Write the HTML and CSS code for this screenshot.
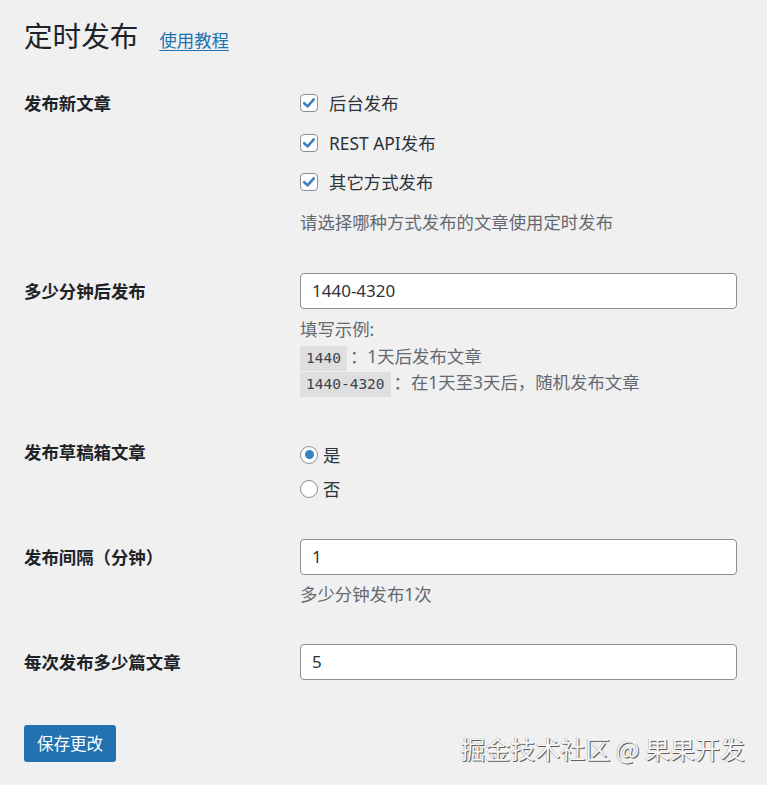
FILE: index.html
```html
<!DOCTYPE html>
<html lang="zh-CN">
<head>
<meta charset="utf-8">
<title>定时发布</title>
<link rel="stylesheet" href="styles.css">
</head>
<body>
<div class="wrap">
  <div class="head">
    <h1 class="title">定时发布</h1>
    <a class="help" href="#">使用教程</a>
  </div>

  <form class="form">
    <div class="row row-1">
      <div class="label">发布新文章</div>
      <div class="field">
        <div class="checks">
          <label class="check"><span class="box"><svg viewBox="0 0 18 18" width="18" height="18"><path d="M4.2 9.2 L7.6 12.4 L13.8 5.4" fill="none" stroke="#3582c4" stroke-width="2.6" stroke-linecap="round" stroke-linejoin="round"/></svg></span>后台发布</label>
          <label class="check"><span class="box"><svg viewBox="0 0 18 18" width="18" height="18"><path d="M4.2 9.2 L7.6 12.4 L13.8 5.4" fill="none" stroke="#3582c4" stroke-width="2.6" stroke-linecap="round" stroke-linejoin="round"/></svg></span>REST API发布</label>
          <label class="check"><span class="box"><svg viewBox="0 0 18 18" width="18" height="18"><path d="M4.2 9.2 L7.6 12.4 L13.8 5.4" fill="none" stroke="#3582c4" stroke-width="2.6" stroke-linecap="round" stroke-linejoin="round"/></svg></span>其它方式发布</label>
        </div>
        <p class="desc desc-1">请选择哪种方式发布的文章使用定时发布</p>
      </div>
    </div>

    <div class="row row-2">
      <div class="label label-input">多少分钟后发布</div>
      <div class="field">
        <div class="input">1440-4320</div>
        <div class="desc desc-lines">
          <div class="line">填写示例:</div>
          <div class="line"><code class="code">1440</code>：1天后发布文章</div>
          <div class="line"><code class="code">1440-4320</code>：在1天至3天后，随机发布文章</div>
        </div>
      </div>
    </div>

    <div class="row row-3">
      <div class="label">发布草稿箱文章</div>
      <div class="field">
        <div class="radios">
          <label class="radio"><span class="dot checked"></span>是</label>
          <label class="radio"><span class="dot"></span>否</label>
        </div>
      </div>
    </div>

    <div class="row row-4">
      <div class="label label-input">发布间隔（分钟）</div>
      <div class="field">
        <div class="input">1</div>
        <p class="desc desc-short">多少分钟发布1次</p>
      </div>
    </div>

    <div class="row row-5">
      <div class="label label-input">每次发布多少篇文章</div>
      <div class="field">
        <div class="input">5</div>
      </div>
    </div>

    <div class="submit">
      <span class="button">保存更改</span>
    </div>
  </form>

  <div class="watermark">掘金技术社区 @ 果果开发</div>
</div>
</body>
</html>
```

FILE: styles.css
```css
html, body {
  margin: 0;
  padding: 0;
  background: #f0f0f1;
}

body {
  font-family: "Noto Sans", "Noto Sans CJK SC", sans-serif;
  color: #1d2327;
  font-size: 17.4px;
  line-height: 26px;
  width: 767px;
  height: 785px;
  overflow: hidden;
}

.wrap {
  position: relative;
  height: 785px;
  padding: 17px 30px 0 24px;
  box-sizing: border-box;
}

.head {
  display: flex;
  align-items: baseline;
  gap: 21px;
}

.title {
  margin: 0;
  font-size: 28.6px;
  line-height: 36px;
  font-weight: 400;
  color: #1d2327;
  font-family: "Noto Sans CJK SC", sans-serif;
}

.help {
  color: #2271b1;
  font-size: 17.4px;
  text-decoration: underline;
  text-underline-offset: 3px;
  font-family: "Noto Sans CJK SC", sans-serif;
}

.form {
  margin: 0;
}

.row {
  display: grid;
  grid-template-columns: 276px 437px;
}

.row-1 { margin-top: 37px; }
.row-2 { margin-top: 38px; }
.row-3 { margin-top: 43px; }
.row-4 { margin-top: 37px; }
.row-5 { margin-top: 37px; }

.label {
  font-weight: 700;
  font-family: "Noto Sans CJK SC", sans-serif;
  color: #1d2327;
}

.label-input {
  padding-top: 5px;
}

.checks {
  display: flex;
  flex-direction: column;
  gap: 13.5px;
}

.check {
  display: flex;
  align-items: center;
  gap: 11px;
  height: 26px;
  color: #2c3338;
}

.box {
  width: 18px;
  height: 18px;
  box-sizing: border-box;
  border: 1px solid #8c8f94;
  border-radius: 4px;
  background: #fff;
  display: flex;
  align-items: center;
  justify-content: center;
  flex: none;
}

.box svg {
  display: block;
  margin: -1px;
}

.desc {
  margin: 0;
  color: #646970;
}

.desc-1 { margin-top: 14px; }
.desc-short { margin-top: 6px; }

.desc-lines {
  margin-top: 7px;
}

.line {
  height: 26.5px;
  line-height: 26.5px;
  white-space: nowrap;
}

.input {
  height: 36px;
  box-sizing: border-box;
  border: 1px solid #8c8f94;
  border-radius: 4px;
  background: #fff;
  padding: 0 11px;
  line-height: 34px;
  color: #2c3338;
  font-size: 17px;
}

.code {
  font-family: "DejaVu Sans Mono", "Liberation Mono", monospace;
  font-size: 14.5px;
  line-height: 1;
  background: rgba(0, 0, 0, 0.07);
  padding: 4px 6px 5px;
  margin-right: 3px;
  color: #3c434a;
}

.radios {
  margin-top: 3px;
  display: flex;
  flex-direction: column;
  gap: 8px;
}

.radio {
  display: flex;
  align-items: center;
  gap: 5px;
  height: 26px;
  color: #2c3338;
  font-family: "Noto Sans CJK SC", sans-serif;
}

.dot {
  width: 18px;
  height: 18px;
  box-sizing: border-box;
  border: 1px solid #8c8f94;
  border-radius: 50%;
  background: #fff;
  flex: none;
  display: flex;
  align-items: center;
  justify-content: center;
}

.dot.checked::before {
  content: "";
  width: 9px;
  height: 9px;
  border-radius: 50%;
  background: #3582c4;
}

.submit {
  margin-top: 45px;
}

.button {
  display: inline-block;
  background: #2271b1;
  color: #fff;
  border-radius: 3px;
  height: 37px;
  line-height: 37px;
  padding: 0 13px;
  font-size: 16.5px;
  font-family: "Noto Sans CJK SC", sans-serif;
}

.watermark {
  position: absolute;
  right: 22px;
  top: 731px;
  font-size: 25px;
  line-height: 34px;
  color: #f7f7f7;
  font-family: "Noto Sans CJK SC", sans-serif;
  text-shadow: 1px 1px 0 #5e5e5e, -0.5px -0.5px 0 #a0a0a0;
  white-space: nowrap;
}
```
